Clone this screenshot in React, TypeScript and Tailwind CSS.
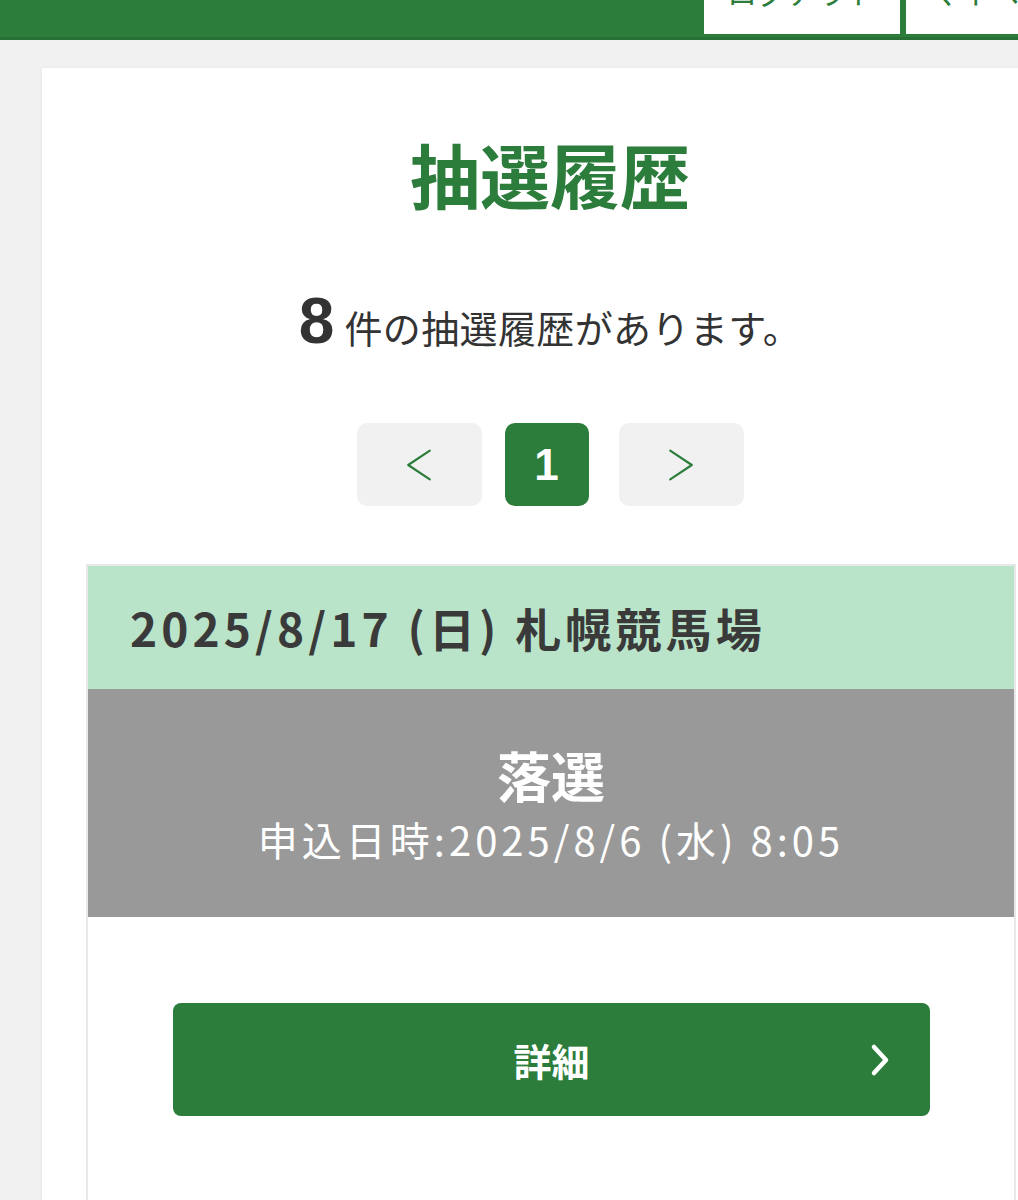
const jp = "font-['Noto_Sans_CJK_JP',sans-serif]";

function Chevron({ dir, className }: { dir: 'left' | 'right'; className?: string }) {
  return (
    <svg viewBox="0 0 32 40" className={className} fill="none" stroke="currentColor" strokeWidth={2.4} strokeLinecap="round" strokeLinejoin="round">
      {dir === 'left' ? <polyline points="28,4 4,20 28,36" /> : <polyline points="4,4 28,20 4,36" />}
    </svg>
  );
}

export default function App() {
  return (
    <div className={`min-h-screen w-[1018px] overflow-hidden bg-[#f1f1f1] ${jp}`}>
      {/* Header */}
      <header className="h-[40px] bg-[#2c7d3b] border-b-[3px] border-[#276f34] overflow-hidden flex items-start pl-[704px] gap-[6px]">
        <div className="shrink-0 -mt-[28px] h-[62px] w-[196px] bg-white flex justify-center pt-[4px] text-[30px] leading-[30px] text-[#2c7d3b]">
          ログアウト
        </div>
        <div className="shrink-0 -mt-[28px] h-[62px] w-[196px] bg-white flex justify-center pt-[4px] text-[30px] leading-[30px] text-[#2c7d3b]">
          マイページ
        </div>
      </header>

      {/* Card */}
      <main className="mt-[28px] ml-[42px] w-[1016px] bg-white shadow-[0_0_4px_rgba(0,0,0,0.06)] pb-[200px]">
        <h1 className="pt-[71px] text-center text-[70px] leading-[70px] font-bold text-[#2c7d3b]">抽選履歴</h1>

        <p className="mt-[80px] text-center text-[#333] flex items-baseline justify-center">
          <span className="font-['Liberation_Sans',sans-serif] font-bold text-[64px] leading-[64px] mr-[10px]">8</span>
          <span className="text-[38px] leading-[64px] tracking-[0.01em]">件の抽選履歴があります。</span>
        </p>

        {/* Pagination */}
        <nav className="mt-[64px] flex justify-center items-center">
          <button className="w-[125px] h-[83px] rounded-[10px] bg-[#f1f1f1] flex items-center justify-center text-[#2c7d3b]">
            <Chevron dir="left" className="w-[30px] h-[36px]" />
          </button>
          <button className="ml-[23px] w-[84px] h-[83px] rounded-[10px] bg-[#2c7d3b] flex items-center justify-center text-white font-['Liberation_Sans',sans-serif] font-bold text-[44px]">
            1
          </button>
          <button className="ml-[30px] w-[125px] h-[83px] rounded-[10px] bg-[#f1f1f1] flex items-center justify-center text-[#2c7d3b]">
            <Chevron dir="right" className="w-[30px] h-[36px]" />
          </button>
        </nav>

        {/* List item */}
        <section className="mt-[58px] ml-[44px] mr-[42px] border-2 border-[#e8e8e8]">
          <div className="h-[123px] bg-[#b9e4c9] flex items-center pl-[42px] text-[46px] font-bold text-[#3a3a3a] tracking-[0.09em]">
            2025/8/17 (日) 札幌競馬場
          </div>
          <div className="h-[228px] bg-[#999999] flex flex-col items-center justify-center text-white">
            <div className="text-[54px] leading-[62px] font-bold">落選</div>
            <div className="mt-[10px] text-[40px] leading-[46px] tracking-[0.1em]">申込日時:2025/8/6 (水) 8:05</div>
          </div>
          <div className="pt-[86px] pb-[120px] pl-[85px] pr-[84px] bg-white">
            <button className="relative w-full h-[113px] rounded-[8px] bg-[#2c7d3b] flex items-center justify-center text-white text-[38px] font-bold">
              詳細
              <svg viewBox="0 0 20 34" className="absolute right-[40px] top-1/2 -translate-y-1/2 w-[20px] h-[34px]" fill="none" stroke="currentColor" strokeWidth={4.5} strokeLinecap="round" strokeLinejoin="round">
                <polyline points="4,4 16,17 4,30" />
              </svg>
            </button>
          </div>
        </section>
      </main>
    </div>
  );
}
